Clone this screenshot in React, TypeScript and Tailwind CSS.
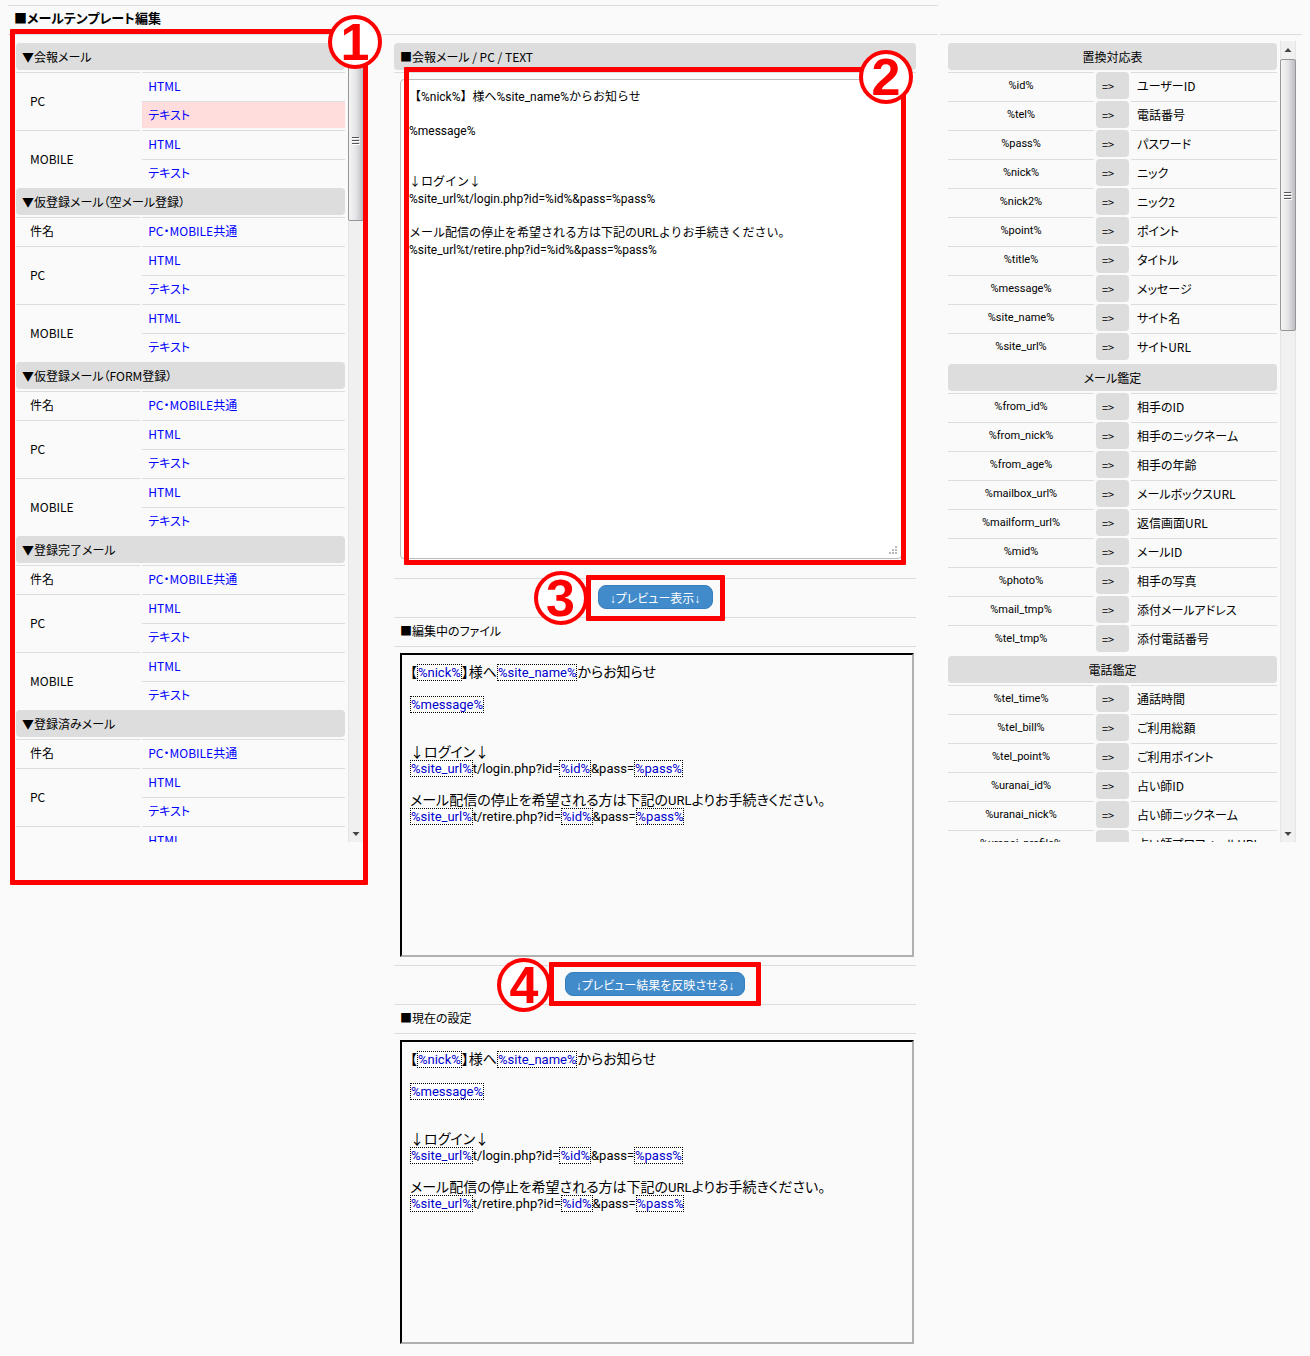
import React from 'react';

interface CodeRow {
  code: string;
  label: string;
}

interface CodeGroup {
  title: string;
  rows: CodeRow[];
}

const templateGroups = [
  { title: '▼会報メール', hasSubject: false, editing: true },
  { title: '▼仮登録メール（空メール登録）', hasSubject: true, editing: false },
  { title: '▼仮登録メール（FORM登録）', hasSubject: true, editing: false },
  { title: '▼登録完了メール', hasSubject: true, editing: false },
  { title: '▼登録済みメール', hasSubject: true, editing: false },
];

const codeGroups: CodeGroup[] = [
  {
    title: '置換対応表',
    rows: [
      { code: '%id%', label: 'ユーザーID' },
      { code: '%tel%', label: '電話番号' },
      { code: '%pass%', label: 'パスワード' },
      { code: '%nick%', label: 'ニック' },
      { code: '%nick2%', label: 'ニック2' },
      { code: '%point%', label: 'ポイント' },
      { code: '%title%', label: 'タイトル' },
      { code: '%message%', label: 'メッセージ' },
      { code: '%site_name%', label: 'サイト名' },
      { code: '%site_url%', label: 'サイトURL' },
    ],
  },
  {
    title: 'メール鑑定',
    rows: [
      { code: '%from_id%', label: '相手のID' },
      { code: '%from_nick%', label: '相手のニックネーム' },
      { code: '%from_age%', label: '相手の年齢' },
      { code: '%mailbox_url%', label: 'メールボックスURL' },
      { code: '%mailform_url%', label: '返信画面URL' },
      { code: '%mid%', label: 'メールID' },
      { code: '%photo%', label: '相手の写真' },
      { code: '%mail_tmp%', label: '添付メールアドレス' },
      { code: '%tel_tmp%', label: '添付電話番号' },
    ],
  },
  {
    title: '電話鑑定',
    rows: [
      { code: '%tel_time%', label: '通話時間' },
      { code: '%tel_bill%', label: 'ご利用総額' },
      { code: '%tel_point%', label: 'ご利用ポイント' },
      { code: '%uranai_id%', label: '占い師ID' },
      { code: '%uranai_nick%', label: '占い師ニックネーム' },
      { code: '%uranai_profile%', label: '占い師プロフィールURL' },
    ],
  },
];

const templateText = `【%nick%】様へ%site_name%からお知らせ

%message%


↓ログイン↓
%site_url%t/login.php?id=%id%&pass=%pass%

メール配信の停止を希望される方は下記のURLよりお手続きください。
%site_url%t/retire.php?id=%id%&pass=%pass%`;

// Numbered red frame laid over the part it explains
const Callout: React.FC<{ no: number; frame: string; badge: string }> = ({ no, frame, badge }) => (
  <>
    <span className={`pointer-events-none absolute z-10 rounded-[1px] border-[5px] border-[#f00] ${frame}`} />
    <span
      className={`pointer-events-none absolute z-20 flex size-[54px] items-center justify-center rounded-full border-4 border-[#f00] bg-white font-['Liberation_Sans',sans-serif] text-[52px] leading-none font-bold text-[#f00] ${badge}`}
    >
      {no}
    </span>
  </>
);

const ScrollBar: React.FC<{ thumb: string }> = ({ thumb }) => (
  <div className="flex w-4 shrink-0 flex-col border-x border-[#e4e4e4] bg-[#f0f0f0]">
    <svg viewBox="0 0 14 18" className="h-[18px] w-full shrink-0">
      <path d="M3.5 11 L7 7 L10.5 11 Z" fill="#444" />
    </svg>
    <div
      className={`-mx-px flex items-center justify-center rounded-xs border border-[#979797] bg-linear-to-r from-[#f5f5f5] via-[#e4e4e7] to-[#bcbcc2] ${thumb}`}
    >
      <svg viewBox="0 0 8 9" className="h-[9px] w-2">
        <path d="M0 1.5H7M0 4.5H7M0 7.5H7" stroke="#555" />
        <path d="M0 2.5H8M0 5.5H8M0 8.5H8" stroke="#fff" />
      </svg>
    </div>
    <svg viewBox="0 0 14 18" className="mt-auto h-[18px] w-full shrink-0">
      <path d="M3.5 8 L7 12 L10.5 8 Z" fill="#444" />
    </svg>
  </div>
);

const TemplateLink: React.FC<{ text: string; active?: boolean }> = ({ text, active }) => (
  <td className={`h-[27px] border-t border-[#ddd] pl-1.5 ${active ? 'bg-[#fdd]' : ''}`}>
    <a href="#" className="text-[#00f]">{text}</a>
  </td>
);

const TemplateList = () => (
  <table className="w-full table-fixed border-separate border-spacing-0.5 text-left">
    <colgroup>
      <col className="w-[38%]" />
      <col />
    </colgroup>
    {templateGroups.map((group) => (
      <tbody key={group.title}>
        <tr>
          <th colSpan={2} className="h-[27px] rounded bg-[#ddd] pl-1.5 font-normal">{group.title}</th>
        </tr>
        {group.hasSubject && (
          <tr>
            <td className="h-[27px] border-t border-[#ddd] pl-3.5">件名</td>
            <TemplateLink text="PC・MOBILE共通" />
          </tr>
        )}
        {['PC', 'MOBILE'].map((device) => (
          <React.Fragment key={device}>
            <tr>
              <td rowSpan={2} className="border-t border-[#ddd] pl-3.5">{device}</td>
              <TemplateLink text="HTML" />
            </tr>
            <tr>
              <TemplateLink text="テキスト" active={group.editing && device === 'PC'} />
            </tr>
          </React.Fragment>
        ))}
      </tbody>
    ))}
  </table>
);

const CodeTable: React.FC<{ group: CodeGroup }> = ({ group }) => (
  <table className="w-full table-fixed border-separate border-spacing-0.5 text-left">
    <colgroup>
      <col />
      <col className="w-[33px]" />
      <col />
    </colgroup>
    <tbody>
      <tr>
        <th colSpan={3} className="h-[27px] rounded bg-[#ddd] text-center font-normal">{group.title}</th>
      </tr>
      {group.rows.map((row) => (
        <tr key={row.code}>
          <td className="h-[27px] border-t border-[#ddd] text-center font-['Roboto',sans-serif] text-[11px]">{row.code}</td>
          <td className="rounded bg-[#ddd] pl-1.5 text-[11px]">=&gt;</td>
          <td className="border-t border-[#ddd] pl-1.5 whitespace-nowrap">{row.label}</td>
        </tr>
      ))}
    </tbody>
  </table>
);

// Replacement codes such as %nick% are boxed, the rest is printed as it is
const Preview = () => (
  <div className="h-[304px] overflow-hidden border-2 border-t-black border-r-[#b0b0b0] border-b-[#b0b0b0] border-l-black p-2 text-sm leading-4">
    {templateText.split('\n').map((line, i) => (
      <p key={i} className="h-4 whitespace-nowrap">
        {line.split(/(%\w+%|[!-$&-~]+)/).map((part, j) => {
          if (/^%\w+%$/.test(part)) {
            return (
              <span
                key={j}
                className="border border-dotted border-black bg-white font-['Roboto',sans-serif] text-[13px] leading-4 text-[#00c]"
              >
                {part}
              </span>
            );
          }
          return j % 2 ? (
            <span key={j} className="font-['Roboto',sans-serif] text-[13px] leading-4">{part}</span>
          ) : (
            part
          );
        })}
      </p>
    ))}
  </div>
);

const buttonClass =
  "h-6 w-full rounded-lg border border-[#357ebd] bg-[#428bca] pt-1 font-['Liberation_Sans','Noto_Sans_CJK_JP',sans-serif] text-xs leading-4 whitespace-nowrap text-white";

const Editor = () => (
  <div className="flex min-w-0 flex-col gap-0.5 p-0.5">
    <label htmlFor="template" className="flex h-[27px] items-center rounded bg-[#ddd] pl-1.5">
      ■会報メール / PC / TEXT
    </label>
    <div className="border-t border-[#ddd] pt-1.5 pr-3.5 pb-[17px] pl-1.5">
      <div className="relative">
        <textarea
          id="template"
          defaultValue={templateText}
          className="block h-[480px] w-full resize-none rounded border border-[#bbb] bg-white px-2 py-[9px] font-['Roboto','Noto_Sans_CJK_JP',sans-serif] text-xs leading-[17px] [font-feature-settings:normal]"
        />
        <svg viewBox="0 0 9 9" className="pointer-events-none absolute right-1 bottom-1 size-[9px]">
          <path d="M6 1h2M3 4h2M6 4h2M0 7h2M3 7h2M6 7h2" stroke="#bbb" strokeWidth="2" />
        </svg>
        <Callout no={2} frame="-top-3 -right-1 -bottom-1.5 left-1" badge="-top-[29px] -right-[11px]" />
      </div>
    </div>
    <div className="flex justify-center border-t border-[#ddd] py-1.5">
      <div className="relative w-[115px]">
        <button type="button" className={buttonClass}>↓プレビュー表示↓</button>
        <Callout no={3} frame="-top-2.5 -right-3 -bottom-3 -left-3" badge="-top-3.5 -left-16" />
      </div>
    </div>
    <h2 className="flex h-[27px] items-center border-t border-[#ddd] pl-1.5">■編集中のファイル</h2>
    <div className="border-t border-[#ddd] py-1.5 pr-0.5 pl-1.5">
      <Preview />
    </div>
    <div className="flex justify-center border-t border-[#ddd] py-1.5">
      <div className="relative w-[180px]">
        <button type="button" className={buttonClass}>↓プレビュー結果を反映させる↓</button>
        <Callout no={4} frame="-top-2.5 -right-4 -bottom-2.5 -left-4" badge="-top-3.5 -left-[68px]" />
      </div>
    </div>
    <h2 className="flex h-[27px] items-center border-t border-[#ddd] pl-1.5">■現在の設定</h2>
    <div className="border-t border-[#ddd] py-1.5 pr-0.5 pl-1.5">
      <Preview />
    </div>
  </div>
);

export default function App() {
  return (
    <div className="min-h-screen bg-[#fafafa] px-2 pt-[5px] font-['Noto_Sans_CJK_JP',sans-serif] text-xs leading-4 text-black [font-feature-settings:'palt']">
      <div className="grid grid-cols-[930fr_362fr] gap-x-0.5">
        <h1 className="flex h-[29px] items-center border-t border-[#ddd] pb-1 pl-1.5 text-[13px] font-bold">
          ■メールテンプレート編集
        </h1>
        <div />

        <div className="grid grid-cols-[350fr_526fr] items-start gap-x-7 border-t border-[#ddd] pt-1.5 pr-5 pl-1.5">
          <div className="relative flex h-[801px]">
            <div className="min-w-0 flex-1 overflow-hidden pr-px">
              <TemplateList />
            </div>
            <ScrollBar thumb="h-[162px]" />
            <Callout no={1} frame="-top-3 -right-1 -bottom-[43px] -left-1" badge="-top-[26px] -right-[18px]" />
          </div>
          <Editor />
        </div>

        <div className="border-t border-[#ddd] px-1.5 pt-1.5">
          <div className="flex h-[801px]">
            <div className="min-w-0 flex-1 overflow-hidden pr-px">
              {codeGroups.map((group) => (
                <CodeTable key={group.title} group={group} />
              ))}
            </div>
            <ScrollBar thumb="h-[272px]" />
          </div>
        </div>
      </div>
    </div>
  );
}
